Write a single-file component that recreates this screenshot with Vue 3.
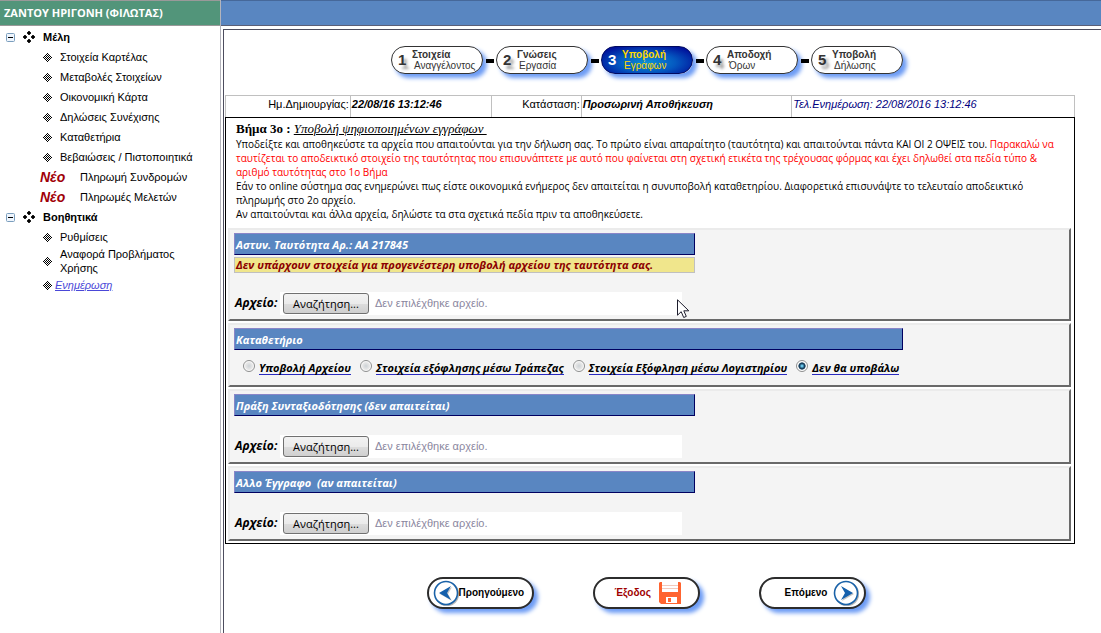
<script setup>
import { ref } from 'vue'

const menu = [
  {
    title: 'Μέλη',
    items: [
      { label: 'Στοιχεία Καρτέλας' },
      { label: 'Μεταβολές Στοιχείων' },
      { label: 'Οικονομική Κάρτα' },
      { label: 'Δηλώσεις Συνέχισης' },
      { label: 'Καταθετήρια' },
      { label: 'Βεβαιώσεις / Πιστοποιητικά' },
      { label: 'Πληρωμή Συνδρομών', fresh: true },
      { label: 'Πληρωμές Μελετών', fresh: true }
    ]
  },
  {
    title: 'Βοηθητικά',
    items: [
      { label: 'Ρυθμίσεις' },
      { label: 'Αναφορά Προβλήματος Χρήσης', tall: true },
      { label: 'Ενημέρωση', active: true }
    ]
  }
]

const steps = [
  { n: 1, a: 'Στοιχεία', b: 'Αναγγέλοντος' },
  { n: 2, a: 'Γνώσεις', b: 'Εργασία' },
  { n: 3, a: 'Υποβολή', b: 'Εγράφων', current: true },
  { n: 4, a: 'Αποδοχή', b: 'Όρων' },
  { n: 5, a: 'Υποβολή', b: 'Δήλωσης' }
]

const options = [
  { id: 'file', label: 'Υποβολή Αρχείου' },
  { id: 'bank', label: 'Στοιχεία εξόφλησης μέσω Τράπεζας' },
  { id: 'office', label: 'Στοιχεία Εξόφληση μέσω Λογιστηρίου' },
  { id: 'none', label: 'Δεν θα υποβάλω' }
]
const choice = ref('none')

const panels = [
  { id: 'identity', title: 'Αστυν. Ταυτότητα Αρ.: ΑΑ 217845', note: 'Δεν υπάρχουν στοιχεία για προγενέστερη υποβολή αρχείου της ταυτότητα σας.' },
  { id: 'deposit', title: 'Καταθετήριο', radios: true },
  { id: 'pension', title: 'Πράξη Συνταξιοδότησης (δεν απαιτείται)' },
  { id: 'other', title: 'Αλλο Έγγραφο  (αν απαιτείται)' }
]

const chosen = ref({})
const pick = (id) => document.getElementById('input-' + id).click()
const onFile = (id, e) => {
  chosen.value[id] = e.target.files[0] ? e.target.files[0].name : ''
}
</script>

<template>
  <div class="app">
    <aside class="sidebar">
      <div class="user">ΖΑΝΤΟΥ ΗΡΙΓΟΝΗ (ΦΙΛΩΤΑΣ)</div>
      <nav>
        <section v-for="g in menu" :key="g.title">
          <div class="group">
            <svg class="toggle" viewBox="0 0 9 9" width="9" height="9">
              <rect x="0.5" y="0.5" width="8" height="8" rx="1" fill="#eef5fd" stroke="#7b9ebd" />
              <path d="M2 4.5h5" stroke="#000" />
            </svg>
            <svg class="dots" viewBox="0 0 12 12" width="12" height="12">
              <path d="M6 0l2 2-2 2-2-2zM2 4l2 2-2 2-2-2zM10 4l2 2-2 2-2-2zM6 8l2 2-2 2-2-2z" fill="#000" stroke="#000" stroke-width=".7" />
            </svg>
            <b>{{ g.title }}</b>
          </div>
          <ul>
            <li v-for="i in g.items" :key="i.label" :class="{ tall: i.tall }">
              <span v-if="i.fresh" class="fresh">Νέο</span>
              <svg v-else class="gem" viewBox="0 0 9 9" width="9" height="9" shape-rendering="crispEdges">
                <path d="M4 0h1v1H4zM3 1h1v1H3zM5 1h1v1H5zM2 2h1v1H2zM4 2h1v1H4zM6 2h1v1H6zM1 3h1v1H1zM3 3h1v1H3zM5 3h1v1H5zM7 3h1v1H7zM0 4h1v1H0zM2 4h1v1H2zM4 4h1v1H4zM6 4h1v1H6zM8 4h1v1H8zM1 5h1v1H1zM3 5h1v1H3zM5 5h1v1H5zM7 5h1v1H7zM2 6h1v1H2zM4 6h1v1H4zM6 6h1v1H6zM3 7h1v1H3zM5 7h1v1H5zM4 8h1v1H4z" fill="#000" />
              </svg>
              <a href="#" :class="{ active: i.active }">{{ i.label }}</a>
            </li>
          </ul>
        </section>
      </nav>
    </aside>

    <div class="right">
      <header class="band"></header>
      <main>
        <div class="content">
          <ol class="steps">
            <li v-for="s in steps" :key="s.n">
              <a href="#" class="pill" :class="{ current: s.current }">
                <span class="num">{{ s.n }}</span>
                <span class="words"><b>{{ s.a }}</b><span>{{ s.b }}</span></span>
              </a>
            </li>
          </ol>

          <table class="info">
            <tbody>
              <tr>
                <th class="c1">Ημ.Δημιουργίας:</th>
                <td class="c2">22/08/16 13:12:46</td>
                <th class="c3">Κατάσταση:</th>
                <td class="c4">Προσωρινή Αποθήκευση</td>
                <td class="c5">Τελ.Ενημέρωση: 22/08/2016 13:12:46</td>
              </tr>
            </tbody>
          </table>

          <div class="box">
            <div class="intro">
              <h1>Βήμα 3ο : <i>Υποβολή ψηφιοποιημένων εγγράφων&nbsp;</i></h1>
              <p>
                Υποδείξτε και αποθηκεύστε τα αρχεία που απαιτούνται για την δήλωση σας. Το πρώτο είναι απαραίτητο (ταυτότητα) και απαιτούνται πάντα ΚΑΙ ΟΙ 2 ΟΨΕΙΣ του.
                <em>Παρακαλώ να</em>
                <em> ταυτίζεται το αποδεικτικό στοιχείο της ταυτότητας που επισυνάπτετε με αυτό που φαίνεται στη σχετική ετικέτα της τρέχουσας φόρμας και έχει δηλωθεί στα πεδία τύπο &amp;<br>αριθμό ταυτότητας στο 1ο Βήμα</em>
              </p>
              <p>Εάν το online σύστημα σας ενημερώνει πως είστε οικονομικά ενήμερος δεν απαιτείται η συνυποβολή καταθετηρίου. Διαφορετικά επισυνάψτε το τελευταίο αποδεικτικό<br>πληρωμής στο 2ο αρχείο.</p>
              <p>Αν απαιτούνται και άλλα αρχεία, δηλώστε τα στα σχετικά πεδία πριν τα αποθηκεύσετε.</p>
            </div>

            <section v-for="p in panels" :key="p.id" class="panel">
              <h2 :class="{ wide: p.radios }">{{ p.title }}</h2>
              <div v-if="p.note" class="note">{{ p.note }}</div>
              <div v-if="p.radios" class="radios">
                <span v-for="o in options" :key="o.id" class="radio">
                  <input :id="o.id" v-model="choice" type="radio" name="deposit" :value="o.id">
                  <label :for="o.id">{{ o.label }}</label>
                </span>
              </div>
              <div v-else class="file">
                <label :for="'input-' + p.id">Αρχείο:</label>
                <div class="picker">
                  <input :id="'input-' + p.id" class="hidden" type="file" tabindex="-1" @change="onFile(p.id, $event)">
                  <button type="button" @click="pick(p.id)">Αναζήτηση...</button>
                  <span>{{ chosen[p.id] || 'Δεν επιλέχθηκε αρχείο.' }}</span>
                </div>
              </div>
            </section>
          </div>

          <div class="actions">
            <button type="button" class="act prev">
              <svg viewBox="0 0 26 26" width="26" height="26">
                <circle cx="14" cy="14" r="11" fill="none" stroke="#888" stroke-width="2.500" opacity=".6" />
                <circle cx="13" cy="13" r="11.500" fill="#fff" stroke="#1a62a8" stroke-width="1.600" />
                <path d="M6 13l12-7-4 7 4 7z" fill="#8a8a8a" opacity=".5" transform="translate(1 1)" />
                <path d="M6 13l12-7-4 7 4 7z" fill="#1560ac" />
              </svg>
              <span>Προηγούμενο</span>
            </button>
            <button type="button" class="act exit">
              <span>Έξοδος</span>
              <svg viewBox="0 0 22 22" width="22" height="22">
                <path d="M1 0h20l1 1v21H2l-2-2V1z" fill="#ff6430" />
                <path d="M3 0h16v10H3z" fill="#fff" />
                <path d="M3 3.500h16M3 6.500h16" stroke="#f3c9bc" />
                <path d="M7 15h11v6H7z" fill="#fff" />
                <path d="M9 16h3v4H9z" fill="#ff6430" />
              </svg>
            </button>
            <button type="button" class="act next">
              <span>Επόμενο</span>
              <svg viewBox="0 0 26 26" width="26" height="26">
                <circle cx="14" cy="14" r="11" fill="none" stroke="#888" stroke-width="2.500" opacity=".6" />
                <circle cx="13" cy="13" r="11.500" fill="#fff" stroke="#1a62a8" stroke-width="1.600" />
                <path d="M20 13L8 6l4 7-4 7z" fill="#8a8a8a" opacity=".5" transform="translate(1 1)" />
                <path d="M20 13L8 6l4 7-4 7z" fill="#1560ac" />
              </svg>
            </button>
          </div>
        </div>
      </main>
    </div>

    <svg class="cursor" viewBox="0 0 13 20" width="13" height="20">
      <path d="M.5.8v15.400l3.700-3.500 2.500 5.800 2.600-1.100-2.500-5.600h5z" fill="#fff" stroke="#1c1c2c" />
    </svg>
  </div>
</template>

<style>
body {
  margin: 0;
  background: #fff;
}
</style>

<style scoped>
.app {
  display: flex;
  position: relative;
  min-height: 100vh;
  font: 11px/14px "Liberation Sans", Arial, sans-serif;
  color: #000;
}

/* sidebar */
.sidebar {
  flex: 0 0 220px;
  border-right: 1px solid #b4b4bc;
}
.user {
  height: 24px;
  border: 1px solid #999;
  border-width: 1px 0;
  padding-left: 4px;
  background: #52957a;
  color: #fff;
  font: bold 11px/24px "Open Sans", sans-serif;
}
nav {
  padding-top: 1px;
}
.group {
  display: flex;
  align-items: center;
  height: 20px;
  padding-left: 6px;
}
.toggle {
  margin-right: 8px;
}
.dots {
  margin-right: 8px;
}
ul {
  margin: 0;
  padding: 0 24px 0 43px;
  list-style: none;
}
li {
  display: flex;
  align-items: center;
  min-height: 20px;
}
.tall {
  min-height: 28px;
}
.gem {
  flex: none;
  margin-right: 8px;
}
.fresh {
  flex: none;
  width: 40px;
  margin-left: -3px;
  color: #a00008;
  font: italic bold 14px/20px "Liberation Sans", sans-serif;
}
li a {
  color: #000;
  text-decoration: none;
}
li a.active {
  margin-left: -5px;
  color: #4a48d8;
  font-style: italic;
  text-decoration: underline;
}

/* right side */
.right {
  flex: 1;
  min-width: 0;
  display: flex;
  flex-direction: column;
}
.band {
  height: 24px;
  border-top: 1px solid #46689a;
  border-bottom: 1px solid #5a5f78;
  background: #5986c1;
}
main {
  flex: 1;
  margin: 3px 0 0 2px;
  border: 1px solid #4d4d5e;
  border-width: 1px 0 0 1px;
}
.content {
  margin: 0 26px 0 1px;
}

/* wizard steps */
.steps {
  display: flex;
  justify-content: center;
  gap: 13px;
  margin: 0;
  padding: 16px 6px 21px 0;
  list-style: none;
}
.steps li {
  position: relative;
}
.steps li + li::before {
  content: "";
  position: absolute;
  left: -10px;
  top: 13px;
  width: 8px;
  height: 4px;
  background: #000;
}
.pill {
  display: flex;
  align-items: center;
  box-sizing: border-box;
  width: 92px;
  height: 28px;
  border: 1px solid #333;
  border-radius: 14px;
  background: #fff;
  box-shadow: 4px 4px 4px #6d9cf5;
  color: #333;
}
.num {
  width: 20px;
  padding-left: 6px;
  box-sizing: border-box;
  font: bold 15px/22px "Liberation Sans", sans-serif;
  text-shadow: 3px 4px 3px #999;
}
.words {
  display: flex;
  flex-direction: column;
  font-size: 10px;
  line-height: 11px;
}
.words > span {
  padding-left: 2px;
}
.current {
  background: radial-gradient(ellipse at 50% 60%, #0a90d8, #0458c0 45%, #00109a 85%);
  border-color: #000a60;
}
.current .num {
  color: #fff;
  text-shadow: none;
}
.current .words {
  color: #ffd800;
}

/* info table */
.info {
  width: 100%;
  table-layout: fixed;
  border-collapse: collapse;
}
.info th,
.info td {
  box-sizing: border-box;
  height: 21px;
  padding: 0 1px 4px;
  border: 1px solid #c0c0c0;
  border-bottom: 0;
  white-space: nowrap;
}
.info th {
  font-weight: normal;
  text-align: right;
}
.info td {
  font-weight: bold;
  font-style: italic;
}
.info .c5 {
  color: #000080;
  font-weight: normal;
}
.c1 { width: 14.700%; }
.c2 { width: 16.600%; }
.c3 { width: 10.600%; }
.c4 { width: 24.800%; }

/* form box */
.box {
  border: 1px solid #000;
  padding: 3px 3px 2px 2px;
}
.intro {
  padding: 0 4px 7px 8px;
}
h1 {
  margin: 0;
  font: bold 13px/16px "Liberation Serif", "Times New Roman", serif;
}
h1 i {
  font-weight: normal;
  text-decoration: underline;
}
p {
  margin: 0;
  font: 10px/14px "Open Sans", sans-serif;
}
p em {
  color: #f00;
  font-style: normal;
}
.panel {
  box-sizing: border-box;
  padding: 3px 4px;
  border: 2px solid #ebebeb;
  border-right-color: #696969;
  border-bottom-color: #696969;
  background: #f4f4f4;
}
.panel + .panel {
  margin-top: 2px;
}
h2 {
  box-sizing: border-box;
  width: 461px;
  max-width: 100%;
  height: 22px;
  margin: 0;
  padding-left: 1px;
  border: 1px solid #000060;
  border-top-color: #8a86c8;
  border-left-color: #8a86c8;
  background: #5986c1;
  color: #fff;
  font: italic bold 11px/21px "Open Sans", sans-serif;
  white-space: pre;
}
h2.wide {
  width: 669px;
}
.note {
  box-sizing: border-box;
  width: 461px;
  max-width: 100%;
  margin-top: 2px;
  padding-left: 1px;
  border: 1px solid #c0c0c0;
  background: #f0e68c;
  color: #8b0000;
  font: italic bold 11px/14px "Open Sans", sans-serif;
}
.radios {
  display: flex;
  padding: 8px 0 7px 9px;
}
.radio {
  display: flex;
  margin-right: 9px;
}
.radio input {
  appearance: none;
  box-sizing: border-box;
  width: 12px;
  height: 12px;
  margin: 2px 4px 0 0;
  border: 1px solid #8e8f8f;
  border-radius: 50%;
  background: radial-gradient(circle, #cdd2d6, #e8e8e8 50%, #fff 70%);
}
.radio input:checked {
  background: radial-gradient(circle at 50% 50%, #6fd0f5 8%, #17405f 36%, #17405f 46%, #fff 56%);
}
.radio label {
  height: 16px;
  border-bottom: 1px solid #2a2ac0;
  font: italic bold 11px/20px "Open Sans", sans-serif;
}
.file {
  display: flex;
  align-items: center;
  margin-top: 19px;
  padding: 0 0 1px 1px;
}
.file > label {
  width: 45px;
  font: italic bold 12px/20px "Open Sans", sans-serif;
}
.picker {
  display: flex;
  align-items: center;
  box-sizing: border-box;
  width: 402px;
  height: 23px;
  padding-left: 3px;
  background: #fff;
  color: #8a869e;
}
.picker button {
  box-sizing: border-box;
  width: 86px;
  height: 21px;
  margin-right: 6px;
  padding: 0;
  border: 1px solid #707070;
  border-radius: 3px;
  background: linear-gradient(#f2f2f2, #ebebeb 50%, #dddddd 51%, #cfcfcf);
  font: 11px/19px "Open Sans", sans-serif;
  color: #000;
}
.hidden {
  position: absolute;
  width: 1px;
  height: 1px;
  opacity: 0;
  pointer-events: none;
}

/* bottom actions */
.actions {
  display: flex;
  justify-content: center;
  gap: 59px;
  padding: 33px 8px 24px 0;
}
.act {
  display: flex;
  align-items: center;
  box-sizing: border-box;
  width: 107px;
  height: 32px;
  padding: 0;
  border: 2px solid #2c2c2c;
  border-radius: 16px;
  background: #fff;
  box-shadow: 4px 4px 4px #6d9cf5;
  color: #000;
  font: bold 10px/14px "Liberation Sans", sans-serif;
}
.prev {
  padding-left: 4px;
}
.exit {
  padding-left: 20px;
  gap: 8px;
  color: #a00000;
}
.next {
  padding-left: 24px;
  gap: 6px;
}

.cursor {
  position: absolute;
  left: 677px;
  top: 299px;
}
</style>
